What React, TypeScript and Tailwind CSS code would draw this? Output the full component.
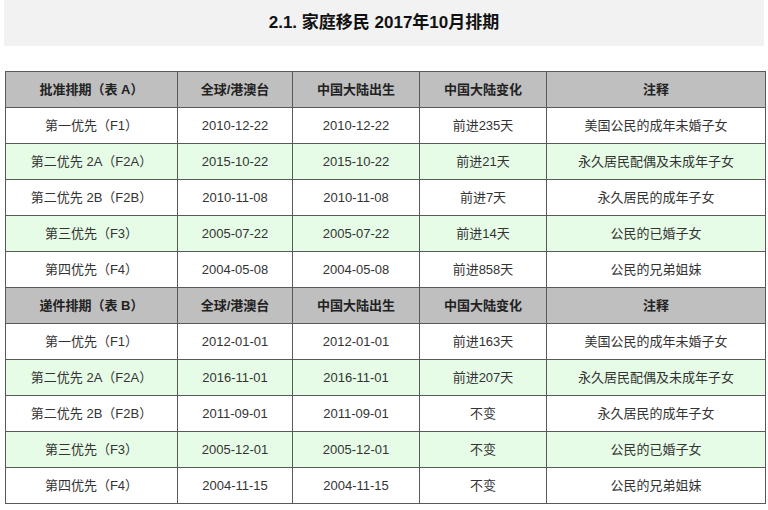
const headA = ["批准排期（表 A）", "全球/港澳台", "中国大陆出生", "中国大陆变化", "注释"]
const headB = ["递件排期（表 B）", "全球/港澳台", "中国大陆出生", "中国大陆变化", "注释"]

const rowsA = [
  ["第一优先（F1）", "2010-12-22", "2010-12-22", "前进235天", "美国公民的成年未婚子女"],
  ["第二优先 2A（F2A）", "2015-10-22", "2015-10-22", "前进21天", "永久居民配偶及未成年子女"],
  ["第二优先 2B（F2B）", "2010-11-08", "2010-11-08", "前进7天", "永久居民的成年子女"],
  ["第三优先（F3）", "2005-07-22", "2005-07-22", "前进14天", "公民的已婚子女"],
  ["第四优先（F4）", "2004-05-08", "2004-05-08", "前进858天", "公民的兄弟姐妹"],
]

const rowsB = [
  ["第一优先（F1）", "2012-01-01", "2012-01-01", "前进163天", "美国公民的成年未婚子女"],
  ["第二优先 2A（F2A）", "2016-11-01", "2016-11-01", "前进207天", "永久居民配偶及未成年子女"],
  ["第二优先 2B（F2B）", "2011-09-01", "2011-09-01", "不变", "永久居民的成年子女"],
  ["第三优先（F3）", "2005-12-01", "2005-12-01", "不变", "公民的已婚子女"],
  ["第四优先（F4）", "2004-11-15", "2004-11-15", "不变", "公民的兄弟姐妹"],
]

function HeadRow({ cells }: { cells: string[] }) {
  return (
    <tr className="h-[36px] bg-[#bfbfbf]">
      {cells.map((c, i) => (
        <th key={i} className="border border-[#595959] text-[13px] font-bold text-[#222] text-center p-0">
          {c}
        </th>
      ))}
    </tr>
  )
}

function BodyRows({ rows }: { rows: string[][] }) {
  return (
    <>
      {rows.map((r, i) => (
        <tr key={i} className={i % 2 == 1 ? "h-[36px] bg-[#e6fce6]" : "h-[36px] bg-white"}>
          {r.map((c, j) => (
            <td key={j} className="border border-[#595959] text-[13px] text-[#333] text-center p-0">
              {c}
            </td>
          ))}
        </tr>
      ))}
    </>
  )
}

export default function App() {
  return (
    <div
      className="w-[768px] h-[510px] bg-white px-[4px] overflow-hidden"
      style={{ fontFamily: '"Liberation Sans", "Noto Sans CJK SC", sans-serif' }}
    >
      <div className="h-[46px] bg-[#f2f2f2] flex items-center justify-center">
        <h1 className="text-[17px] font-bold text-[#111]">2.1. 家庭移民 2017年10月排期</h1>
      </div>

      <table className="mt-[25px] ml-[1px] w-[760px] table-fixed border-collapse">
        <colgroup>
          <col className="w-[172px]" />
          <col className="w-[115px]" />
          <col className="w-[127px]" />
          <col className="w-[127px]" />
          <col className="w-[219px]" />
        </colgroup>
        <tbody>
          <HeadRow cells={headA} />
          <BodyRows rows={rowsA} />
          <HeadRow cells={headB} />
          <BodyRows rows={rowsB} />
        </tbody>
      </table>
    </div>
  )
}
